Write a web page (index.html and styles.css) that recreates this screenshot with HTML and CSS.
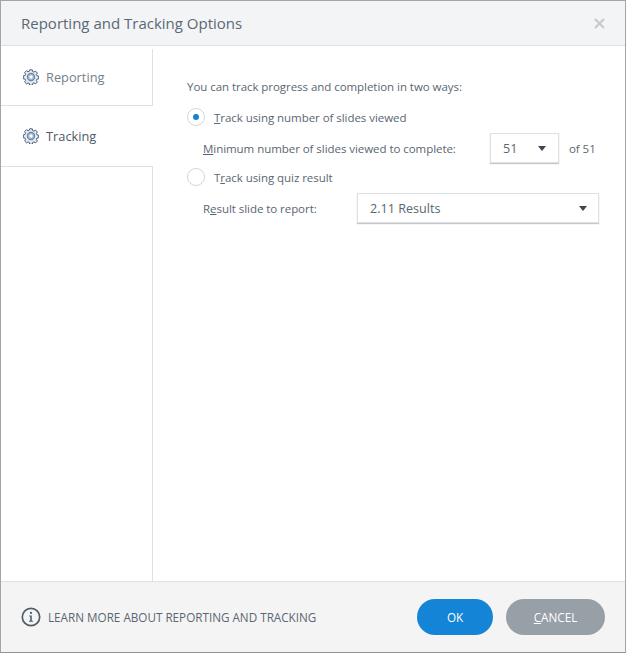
FILE: index.html
```html
<!DOCTYPE html>
<html lang="en">
<head>
<meta charset="utf-8">
<title>Reporting and Tracking Options</title>
<link rel="stylesheet" href="styles.css">
</head>
<body>
<svg class="defs" width="0" height="0" aria-hidden="true">
  <defs>
    <symbol id="gear" viewBox="0 0 16 16">
      <path d="M6.7 .8h2.6l.4 1.8 1.2.5 1.6-1 1.9 1.9-1 1.6.5 1.2 1.8.4v2.6l-1.8.4-.5 1.2 1 1.6-1.9 1.9-1.6-1-1.2.5-.4 1.8H6.7l-.4-1.8-1.2-.5-1.6 1-1.9-1.9 1-1.6-.5-1.2-1.8-.4V6.8l1.8-.4.5-1.2-1-1.6 1.9-1.9 1.6 1 1.2-.5z" fill="#e3e9f0" stroke="#46617f" stroke-width="1"/>
      <circle cx="8" cy="8" r="3.6" fill="#a3b8cf" stroke="#6d86a1" stroke-width="1.1"/>
      <circle cx="8" cy="8" r="1.7" fill="#fff"/>
    </symbol>
  </defs>
</svg>
<div class="dialog">
  <header class="title-bar">
    <h1 class="title">Reporting and Tracking Options</h1>
    <svg class="close" width="11" height="11" viewBox="0 0 11 11" aria-label="Close"><path d="M1 1l9 9M10 1l-9 9" stroke="#c8cbce" stroke-width="2.2" fill="none"/></svg>
  </header>
  <div class="main">
    <nav class="sidebar">
      <div class="tab tab-reporting">
        <svg class="gear" width="16" height="16"><use href="#gear"/></svg>
        <span>Reporting</span>
      </div>
      <div class="tab tab-tracking">
        <svg class="gear" width="16" height="16"><use href="#gear"/></svg>
        <span>Tracking</span>
      </div>
      <div class="side-rest"></div>
    </nav>
    <section class="content">
      <p class="intro">You can track progress and completion in two ways:</p>
      <div class="radio-row first">
        <span class="radio checked"></span>
        <span class="label"><u>T</u>rack using number of slides viewed</span>
      </div>
      <div class="field-row slides-row">
        <span class="label"><u>M</u>inimum number of slides viewed to complete:</span>
        <div class="select small"><span>51</span><i class="caret"></i></div>
        <span class="of">of 51</span>
      </div>
      <div class="radio-row second">
        <span class="radio"></span>
        <span class="label">T<u>r</u>ack using quiz result</span>
      </div>
      <div class="field-row result-row">
        <span class="label result-label">R<u>e</u>sult slide to report:</span>
        <div class="select wide"><span>2.11 Results</span><i class="caret"></i></div>
      </div>
    </section>
  </div>
  <footer class="footer">
    <div class="learn">
      <svg class="info" width="20" height="20" viewBox="0 0 20 20"><circle cx="10" cy="10" r="8.7" fill="none" stroke="#4f5d68" stroke-width="1.7"/><circle cx="10" cy="5.9" r="1.1" fill="#4f5d68"/><path d="M8.2 8.6h2.6v5.2h1.2v1H8v-1h1.2V9.6h-1z" fill="#4f5d68"/></svg>
      <span>LEARN MORE ABOUT REPORTING AND TRACKING</span>
    </div>
    <div class="buttons">
      <button class="btn ok" type="button">OK</button>
      <button class="btn cancel" type="button"><u>C</u>ANCEL</button>
    </div>
  </footer>
</div>
</body>
</html>
```
FILE: styles.css
```css
* { box-sizing: border-box; }
html, body { margin: 0; padding: 0; }
body {
  width: 626px;
  height: 653px;
  overflow: hidden;
  font-family: "Open Sans", "Noto Sans", sans-serif;
  color: #4f5b66;
  background: #fff;
}
.defs { position: absolute; }
.dialog {
  width: 626px;
  height: 653px;
  border: 1px solid #a3a5a7;
  border-bottom-color: #8f9193;
  display: flex;
  flex-direction: column;
  background: #fff;
}
.title-bar {
  height: 45px;
  flex: none;
  background: #f2f4f6;
  border-bottom: 1px solid #dde1e4;
  display: flex;
  align-items: center;
  justify-content: space-between;
  padding: 0 20px;
}
.title {
  margin: 0;
  font-size: 15px;
  font-weight: 400;
  color: #5c6873;
}
.main { flex: 1; display: flex; min-height: 0; }
.sidebar { width: 152px; flex: none; display: flex; flex-direction: column; }
.tab {
  display: flex;
  align-items: center;
  gap: 7px;
  padding-left: 22px;
  font-size: 12.8px;
}
.tab-reporting {
  height: 60px;
  padding-top: 2px;
  color: #75818c;
  border-bottom: 1px solid #dde1e4;
  background: linear-gradient(#dde1e4, #dde1e4) right 3px / 1px 100% no-repeat;
}
.tab-tracking {
  height: 61px;
  color: #4f5b66;
  font-weight: 500;
  border-bottom: 1px solid #dde1e4;
}
.side-rest { flex: 1; border-right: 1px solid #dde1e4; }
.content { flex: 1; padding: 32px 27px 0 34px; font-size: 11.5px; letter-spacing: -0.05px; color: #5a6671; }
.intro { margin: 0 0 12px; line-height: 17px; }
.radio-row { display: flex; align-items: center; gap: 9px; height: 20px; }
.radio {
  width: 18px;
  height: 18px;
  border-radius: 50%;
  border: 1px solid #d3d6d9;
  background: #fff;
  display: flex;
  align-items: center;
  justify-content: center;
}
.radio.checked::after {
  content: "";
  width: 6px;
  height: 6px;
  border-radius: 50%;
  background: #1482d0;
}
.field-row { display: flex; align-items: center; padding-left: 16px; }
.slides-row { margin-top: 6px; height: 30px; }
.slides-row .label { width: 287px; }
.second { margin-top: 4px; }
.result-row { margin-top: 6px; height: 30px; }
.result-label { width: 154px; }
.select {
  height: 30px;
  border: 1px solid #dde1e4;
  box-shadow: 0 1px 1px #c4c9cd;
  background: #fff;
  display: flex;
  align-items: center;
  justify-content: space-between;
  font-size: 12.6px;
  letter-spacing: 0;
}
.small { width: 69px; padding: 0 12px; }
.wide { width: 242px; padding: 0 11px 0 12px; }
.caret {
  width: 0;
  height: 0;
  border-left: 4.5px solid transparent;
  border-right: 4.5px solid transparent;
  border-top: 5px solid #3d4650;
}
.of { margin-left: 10px; }
.footer {
  height: 71px;
  flex: none;
  background: #f4f4f5;
  border-top: 1px solid #dde1e4;
  display: flex;
  align-items: center;
  justify-content: space-between;
  padding: 0 20px;
}
.learn { display: flex; align-items: center; gap: 7px; font-size: 11.7px; color: #5a6671; }
.buttons { display: flex; gap: 13px; }
.btn {
  height: 36px;
  border: 0;
  border-radius: 18px;
  color: #fff;
  font: 400 11.7px "Open Sans", "Noto Sans", sans-serif;
  padding: 0;
}
.ok { width: 76px; background: #1484d6; }
.cancel { width: 99px; background: #979fa7; }
```
